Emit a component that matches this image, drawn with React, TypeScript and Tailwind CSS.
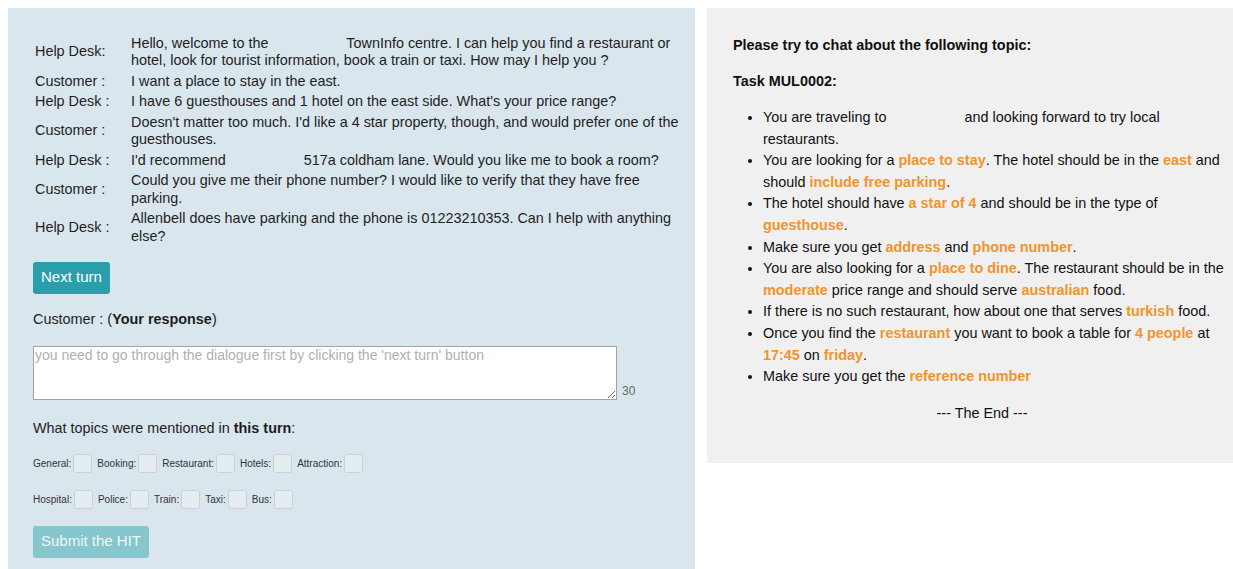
import { ReactElement, ReactNode } from "react";

interface Turn {
  speaker: string;
  text: ReactNode;
}

// gap left where the city name is blanked out
const Blank = () => <span className="inline-block w-[70px]" />;

const turns: Turn[] = [
  {
    speaker: "Help Desk:",
    text: (
      <>
        Hello, welcome to the <Blank /> TownInfo centre. I can help you find a restaurant or hotel, look for
        tourist information, book a train or taxi. How may I help you ?
      </>
    ),
  },
  { speaker: "Customer :", text: "I want a place to stay in the east." },
  { speaker: "Help Desk :", text: "I have 6 guesthouses and 1 hotel on the east side. What's your price range?" },
  {
    speaker: "Customer :",
    text: "Doesn't matter too much. I'd like a 4 star property, though, and would prefer one of the guesthouses.",
  },
  {
    speaker: "Help Desk :",
    text: (
      <>
        I'd recommend <Blank /> 517a coldham lane. Would you like me to book a room?
      </>
    ),
  },
  {
    speaker: "Customer :",
    text: "Could you give me their phone number? I would like to verify that they have free parking.",
  },
  {
    speaker: "Help Desk :",
    text: "Allenbell does have parking and the phone is 01223210353. Can I help with anything else?",
  },
];

const topicRows = [
  ["General", "Booking", "Restaurant", "Hotels", "Attraction"],
  ["Hospital", "Police", "Train", "Taxi", "Bus"],
];

const Hl = ({ children }: { children: ReactNode }) => (
  <span className="font-bold text-[#f0942c]">{children}</span>
);

function Dialogue(): ReactElement {
  return (
    <div className="flex flex-col">
      {turns.map((t, i) => (
        <div key={i} className="flex items-center py-[1.5px] leading-[17.5px]">
          <div className="w-[98px] shrink-0 pl-[2px]">{t.speaker}</div>
          <div className="w-[552px]">{t.text}</div>
        </div>
      ))}
    </div>
  );
}

function Topics(): ReactElement {
  return (
    <div className="flex flex-col gap-[17px] mt-[16px]">
      {topicRows.map((row, r) => (
        <div key={r} className="flex items-center gap-[5px] text-[10px] text-[#333]">
          {row.map((name) => (
            <label key={name} className="flex items-center">
              <span>{name}:</span>
              <span className="ml-[2px] w-[19px] h-[19px] rounded-[3px] border border-[#c9d2d6] bg-[#e6edf0]" />
            </label>
          ))}
        </div>
      ))}
    </div>
  );
}

export default function App(): ReactElement {
  return (
    <div className="flex gap-[12px] pt-[8px] pl-[8px] h-[569px] overflow-hidden bg-white text-[14.4px] text-[#1e1e1e] font-['Liberation_Sans',Arial,sans-serif]">
      <div className="w-[687px] shrink-0 bg-[#dae6ed] pl-[25px] pt-[25px] pb-[40px]">
        <Dialogue />
        <button className="mt-[15px] h-[32px] px-[8px] rounded-[3px] bg-[#2a9fab] text-white text-[15px]">
          Next turn
        </button>
        <p className="mt-[15px] leading-[20px]">
          Customer : (<b>Your response</b>)
        </p>
        <div className="flex items-end gap-[5px] mt-[17px]">
          <textarea
            disabled
            placeholder="you need to go through the dialogue first by clicking the 'next turn' button"
            className="w-[584px] h-[54px] bg-white border border-[#a3a3a3] px-[1px] py-0 leading-[17px] text-[14px] placeholder:text-[#b0b0b0]"
          />
          <span className="text-[12px] text-[#666] leading-[16px] mb-[1px]">30</span>
        </div>
        <p className="mt-[18px] leading-[20px]">
          What topics were mentioned in <b>this turn</b>:
        </p>
        <Topics />
        <button className="mt-[17px] h-[32px] px-[8px] rounded-[3px] bg-[#86c6cd] text-[#eef8f9] text-[15px]">
          Submit the HIT
        </button>
      </div>

      <div className="flex-1 self-start bg-[#f0f0f0] pl-[26px] pr-[2px] pt-[27px] pb-[40px] text-[#111]">
        <p className="font-bold leading-[20px]">Please try to chat about the following topic:</p>
        <p className="font-bold leading-[20px] mt-[16px]">Task MUL0002:</p>
        <ul className="list-disc pl-[30px] mt-[16px] leading-[21.6px]">
          <li>
            You are traveling to <Blank /> and looking forward to try local restaurants.
          </li>
          <li>
            You are looking for a <Hl>place to stay</Hl>. The hotel should be in the <Hl>east</Hl> and should{" "}
            <Hl>include free parking</Hl>.
          </li>
          <li>
            The hotel should have <Hl>a star of 4</Hl> and should be in the type of <Hl>guesthouse</Hl>.
          </li>
          <li>
            Make sure you get <Hl>address</Hl> and <Hl>phone number</Hl>.
          </li>
          <li>
            You are also looking for a <Hl>place to dine</Hl>. The restaurant should be in the <Hl>moderate</Hl>{" "}
            price range and should serve <Hl>australian</Hl> food.
          </li>
          <li>
            If there is no such restaurant, how about one that serves <Hl>turkish</Hl> food.
          </li>
          <li>
            Once you find the <Hl>restaurant</Hl> you want to book a table for <Hl>4 people</Hl> at{" "}
            <Hl>17:45</Hl> on <Hl>friday</Hl>.
          </li>
          <li>
            Make sure you get the <Hl>reference number</Hl>
          </li>
        </ul>
        <p className="text-center leading-[20px] mt-[15px]">--- The End ---</p>
      </div>
    </div>
  );
}
